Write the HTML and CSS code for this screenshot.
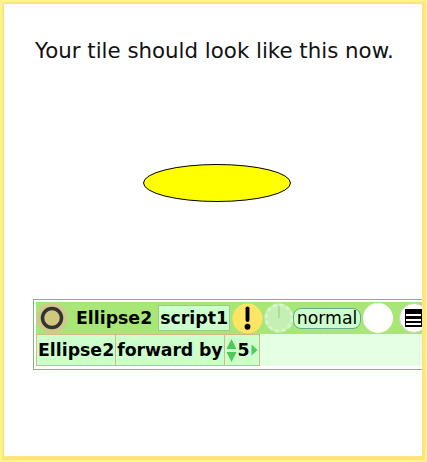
FILE: index.html
```html
<!DOCTYPE html>
<html lang="en">
<head>
    <meta charset="UTF-8">
    <title>Your tile</title>
    <link rel="stylesheet" href="styles.css">
</head>
<body>
    <div class="frame">
        <h1 class="title">Your tile should look like this now.</h1>
        <div class="stage">
            <svg class="ellipse" width="150" height="40" viewBox="0 0 150 40">
                <ellipse cx="74" cy="19" rx="73.5" ry="18.5" fill="#ffff00" stroke="#000000" stroke-width="1"/>
            </svg>
        </div>
        <div class="tile">
            <div class="tile-head">
                <svg class="menu-dot" width="32" height="32" viewBox="0 0 32 32">
                    <circle cx="16" cy="16" r="15.5" fill="#cfc98a"/>
                    <circle cx="16" cy="16" r="9.5" fill="#cfc97f" stroke="#333333" stroke-width="3.5"/>
                </svg>
                <span class="tile-name">Ellipse2</span>
                <span class="script-name">script1</span>
                <svg class="round-btn" width="31" height="31" viewBox="0 0 32 32">
                    <circle cx="16" cy="16" r="15.5" fill="#ffe566"/>
                    <rect x="14" y="3.5" width="4" height="16" rx="2" fill="#000000"/>
                    <circle cx="16" cy="24.5" r="3" fill="#000000"/>
                </svg>
                <svg class="clock" width="30" height="30" viewBox="0 0 30 30">
                    <circle cx="15" cy="15" r="14.5" fill="#c4f0b4"/>
                    <circle cx="15" cy="15" r="13" fill="none" stroke="#d6f5d0" stroke-width="3" stroke-dasharray="4 2.8"/>
                    <rect x="14.2" y="3" width="1.6" height="12" fill="#a5d79a"/>
                </svg>
                <span class="status">normal</span>
                <div class="white-dot"></div>
                <div class="menu-btn"><div class="burger"></div></div>
            </div>
            <div class="tile-row">
                <span class="cell cell-subject">Ellipse2</span>
                <span class="cell cell-command">forward by</span>
                <span class="cell number">
                    <svg width="11" height="25" viewBox="0 0 11 25">
                        <path d="M5.5 1 L10.5 11 H0.5 Z M0.5 14 H10.5 L5.5 24 Z" fill="#4fc95a"/>
                    </svg>
                    <span>5</span>
                    <svg width="7" height="12" viewBox="0 0 7 12">
                        <path d="M0.5 0.5 L6.5 6 L0.5 11.5 Z" fill="#4fc95a"/>
                    </svg>
                </span>
            </div>
        </div>
    </div>
</body>
</html>
```

FILE: styles.css
```css
html, body {
    margin: 0;
    padding: 0;
}
body {
    width: 427px;
    height: 462px;
    overflow: hidden;
    background-color: #ffffff;
    font-family: "DejaVu Sans", sans-serif;
}
.frame {
    box-sizing: border-box;
    width: 427px;
    height: 462px;
    padding-left: 29px;
    border-style: solid;
    border-color: #ffe47a;
    border-width: 4px 5px 6px 4px;
    outline: 2px solid #fdf58a;
    outline-offset: -2px;
    overflow: hidden;
}
.title {
    margin: 0;
    padding: 34px 0 0 2px;
    font-size: 21.33px;
    line-height: 25px;
    font-weight: normal;
    color: #111111;
    white-space: nowrap;
}
.stage {
    height: 40px;
    padding: 101px 0 0 110px;
}
.ellipse {
    display: block;
}
.tile {
    box-sizing: border-box;
    width: 420px;
    height: 71px;
    margin-top: 95px;
    padding: 2px;
    border: 1px solid #7dbb7d;
}
.tile-head {
    display: flex;
    align-items: center;
    height: 32px;
    background-color: #a8e678;
}
.menu-dot {
    flex: none;
}
.tile-name {
    margin-left: 8px;
    font-size: 17.33px;
    font-weight: bold;
    color: #000000;
}
.script-name {
    box-sizing: border-box;
    height: 26px;
    margin-left: 6px;
    padding: 0 1px;
    font-size: 17.33px;
    line-height: 24px;
    font-weight: bold;
    background-color: #ccffcc;
    border: 1px solid #9ccc8c;
}
.round-btn {
    flex: none;
    margin-left: 2px;
}
.clock {
    flex: none;
    margin-left: 1px;
}
.status {
    box-sizing: border-box;
    width: 68px;
    height: 21px;
    margin-left: -1px;
    font-size: 17.33px;
    line-height: 19px;
    text-align: center;
    background-color: #ccffcc;
    border: 1px solid #66aa88;
    border-radius: 8px;
}
.white-dot {
    flex: none;
    width: 30px;
    height: 30px;
    margin-left: 2px;
    border-radius: 50%;
    background-color: #ffffff;
}
.menu-btn {
    flex: none;
    display: flex;
    align-items: center;
    justify-content: center;
    box-sizing: border-box;
    width: 30px;
    height: 30px;
    margin-left: 6px;
    border-radius: 50%;
    background-color: #ffffff;
    border: 1px solid #cccccc;
}
.burger {
    flex: none;
    width: 18px;
    height: 18px;
    background: linear-gradient(#000000 0 5.5px, #ffffff 5.5px 7.5px, #000000 7.5px 10px, #ffffff 10px 12px, #000000 12px 14.5px, #ffffff 14.5px 16.5px, #000000 16.5px) 1px 0 / 15px 18px no-repeat #000000;
}
.tile-row {
    display: flex;
    height: 32px;
    background-color: #e5ffe5;
}
.cell {
    box-sizing: border-box;
    display: flex;
    align-items: center;
    height: 32px;
    padding: 0 1px;
    font-size: 17.33px;
    font-weight: bold;
    background-color: #ccffcc;
    border: 1px solid #d0b88c;
    border-left-width: 0;
}
.cell-subject {
    border-left-width: 1px;
}
.cell-command {
    letter-spacing: -0.1px;
}
.number {
    gap: 1px;
}
```
